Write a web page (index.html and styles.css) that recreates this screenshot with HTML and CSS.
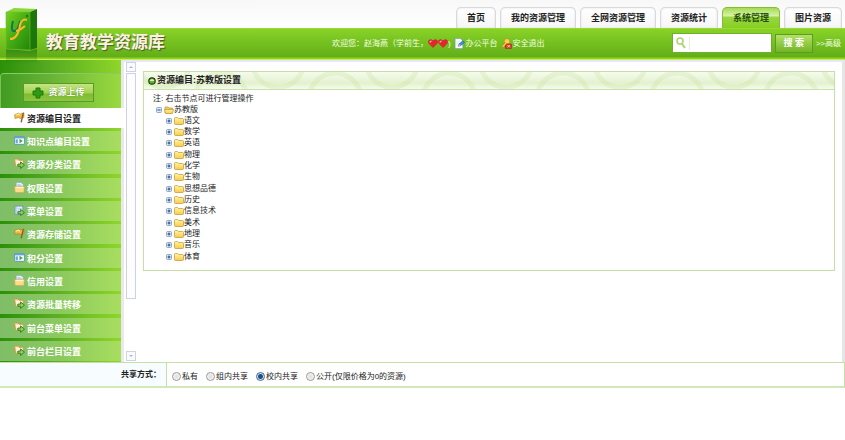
FILE: index.html
```html
<!DOCTYPE html>
<html>

<head>
    <meta charset="UTF-8">
    <meta name="viewport" content="width=device-width, initial-scale=1.0">
    <title>教育教学资源库</title>
    <link rel="stylesheet" href="styles.css">
</head>

<body>
    <svg class="sprite" xmlns="http://www.w3.org/2000/svg">
        <linearGradient id="folder-fill" x1="0" y1="0" x2="0" y2="1">
            <stop offset="0" stop-color="#fff6a8" />
            <stop offset="1" stop-color="#f8cb48" />
        </linearGradient>
        <symbol id="flag" viewBox="0 0 20 20">
            <path d="M1 5 L8 2 L11 4 L18 1 L18 10 L11 12 L8 10 L2 12 Z" fill="#f5b83d" stroke="#a8752a" />
            <path d="M3 6 L8 4 L11 6" fill="none" stroke="#fff0a0" stroke-width="2" />
            <path d="M17 2 L13 19" stroke="#8a5f2c" stroke-width="2.5" />
        </symbol>
        <symbol id="window" viewBox="0 0 20 20">
            <rect x="1" y="3" width="18" height="14" rx="1" fill="#f4fbff" stroke="#4d8fd0" stroke-width="1.5" />
            <path d="M1 5 H19" stroke="#4d8fd0" stroke-width="2" />
            <rect x="3" y="8" width="4" height="7" fill="#6aa7e0" />
            <path d="M10 7 L16 11 L10 15 Z" fill="#4da33a" />
        </symbol>
        <symbol id="move" viewBox="0 0 20 20">
            <path d="M1 2 H7 L9 4 H17 V15 H3 Z" fill="#fbe3b2" stroke="#e08f3c" stroke-width="1.5" />
            <path d="M4 7 H15 M5 10 H9" stroke="#fff" stroke-width="2" />
            <path d="M7 11 H12 V7 L19 13 L12 19 V15 H7 Z" fill="#8fd05a" stroke="#2c7a22" stroke-width="1.6" />
        </symbol>
        <symbol id="docs" viewBox="0 0 20 20">
            <path d="M4 1 H13 L17 5 V12 H4 Z" fill="#eaf5ff" stroke="#74a5d2" />
            <path d="M6 5 H12 M6 7 H15" stroke="#74a5d2" />
            <path d="M1 8 H19 L18 19 H2 Z" fill="#fbdc8b" stroke="#d9a04a" />
            <path d="M3 10 H17" stroke="#fff4c8" stroke-width="2" />
        </symbol>
        <symbol id="menu" viewBox="0 0 20 20">
            <rect x="2" y="2" width="14" height="15" fill="#edf5ff" stroke="#6c8fd0" stroke-width="1.5" />
            <path d="M5 2 V17 M7 6 H14 M7 9 H14" stroke="#7fa4dc" />
            <path d="M7 12 H12 V8 L19 14 L12 19 V16 H7 Z" fill="#8fd05a" stroke="#2c7a22" stroke-width="1.6" />
        </symbol>
        <symbol id="heart" viewBox="0 0 20 18">
            <path d="M10 17 L2 9 C-2 3 5 -2 10 4 C15 -2 22 3 18 9 Z" fill="#f02030" stroke="#b01822" />
            <path d="M4 7 Q4 4 7 4" fill="none" stroke="#ffc0c0" stroke-width="2.5" />
        </symbol>
        <symbol id="edit" viewBox="0 0 20 20">
            <path d="M2 1 H12 L16 5 V19 H2 Z" fill="#fff" stroke="#6390cc" />
            <path d="M4 7 H11 M4 10 H10 M4 13 H8" stroke="#c9def5" />
            <path d="M8 15 L9 11 L16 5 L19 8 L12 14 Z" fill="#3f93e4" stroke="#20549b" />
            <path d="M8 15 L9 11 L12 14 Z" fill="#f1c174" />
        </symbol>
        <symbol id="exit" viewBox="0 0 20 20">
            <circle cx="11" cy="6" r="5" fill="#ffd34d" stroke="#b57c18" />
            <path d="M8 8 L1 16 L4 17 L10 11" fill="#ffd34d" stroke="#b57c18" />
            <path d="M10 11 H19 V19 H8 V14 Z" fill="#e73a26" stroke="#a51f14" />
            <path d="M12 13 L16 17 M16 13 L12 17" stroke="#fff" stroke-width="1.5" />
        </symbol>
        <symbol id="folder" viewBox="0 0 20 16">
            <path d="M1 3 Q1 1 3 1 H7 L9 3 H17 Q19 3 19 5 V13 Q19 15 17 15 H3 Q1 15 1 13 Z" fill="url(#folder-fill)" stroke="#c29a35" stroke-width="1.5" />
        </symbol>
        <symbol id="folder-open" viewBox="0 0 20 16">
            <path d="M2 14 V2 H8 L10 4 H17 V7" fill="#f4cd62" stroke="#c29a35" stroke-width="1.5" />
            <path d="M1 7 H19 L17 15 H3 Z" fill="url(#folder-fill)" stroke="#c29a35" stroke-width="1.5" />
        </symbol>
        <symbol id="plus" viewBox="0 0 12 12">
            <rect x="1" y="1" width="10" height="10" rx="2" fill="#dcebfa" stroke="#6f91bd" stroke-width="1.5" />
            <path d="M3 6 H9 M6 3 V9" stroke="#1d3768" stroke-width="1.8" />
        </symbol>
        <symbol id="minus" viewBox="0 0 12 12">
            <rect x="1" y="1" width="10" height="10" rx="2" fill="#dcebfa" stroke="#6f91bd" stroke-width="1.5" />
            <path d="M3 6 H9" stroke="#1d3768" stroke-width="1.8" />
        </symbol>
    </svg>

    <header>
        <svg class="logo" viewBox="0 0 40 60" xmlns="http://www.w3.org/2000/svg">
            <defs>
                <linearGradient id="box-front" x1="0" y1="0" x2="1" y2="1">
                    <stop offset="0" stop-color="#7ad022" />
                    <stop offset="0.5" stop-color="#43ab12" />
                    <stop offset="1" stop-color="#23860a" />
                </linearGradient>
                <linearGradient id="box-reflection" x1="0" y1="0" x2="0" y2="1">
                    <stop offset="0" stop-color="#14690a" stop-opacity="0.6" />
                    <stop offset="1" stop-color="#14690a" stop-opacity="0" />
                </linearGradient>
            </defs>
            <path d="M6 41 L30 43 L37 41 V56 H6 Z" fill="url(#box-reflection)" />
            <path d="M6 4 L14 0 L37 1 L30 4 Z" fill="#8ad835" />
            <path d="M30 4 L37 1 V40 L30 42 Z" fill="#1c760b" />
            <path d="M6 4 L30 4 V42 L6 41 Z" fill="url(#box-front)" stroke="#6cc52b" stroke-width="0.6" />
            <path d="M13 13 Q10 24 15 23 Q19 21 20 13" fill="none" stroke="#0d7a50" stroke-width="2" />
            <path d="M27 12 Q22 10 20 17 Q18 31 10 31 M16 23 Q21 22 25 18" fill="none" stroke="#ffb52c" stroke-width="2" />
            <circle cx="27" cy="8" r="1" fill="#17690a" />
        </svg>
        <nav class="tabs">
            <a href="#">首页</a>
            <a href="#">我的资源管理</a>
            <a href="#">全网资源管理</a>
            <a href="#">资源统计</a>
            <a href="#" class="active">系统管理</a>
            <a href="#">图片资源</a>
        </nav>
        <div class="bar">
            <h1>教育教学资源库</h1>
            <div class="user">
                <span>欢迎您：赵海燕（学前生，</span>
                <svg class="heart"><use href="#heart" /></svg>
                <svg class="heart"><use href="#heart" /></svg>
                <span>)</span>
                <a href="#"><svg class="icon"><use href="#edit" /></svg>办公平台</a>
                <a href="#"><svg class="icon"><use href="#exit" /></svg>安全退出</a>
            </div>
            <form class="search">
                <div class="search-box">
                    <svg class="lens" viewBox="0 0 10 12">
                        <circle cx="4" cy="4" r="3" fill="none" stroke="#a9d56e" stroke-width="1.5" />
                        <path d="M6 7 L9 11" stroke="#a9d56e" stroke-width="2" />
                    </svg>
                    <input type="text" aria-label="搜索">
                </div>
                <button type="button">搜 索</button>
                <a href="#">&gt;&gt;高级</a>
            </form>
        </div>
    </header>

    <main>
        <aside>
            <div class="upload">
                <button type="button">
                    <svg viewBox="0 0 12 12"><path d="M4 1 H8 V4 H11 V8 H8 V11 H4 V8 H1 V4 H4 Z" fill="#2f9a16" stroke="#1f7a0c" /></svg>
                    资源上传
                </button>
            </div>
            <ul class="menu">
                <li class="active"><a href="#"><svg class="icon"><use href="#flag" /></svg>资源编目设置</a></li>
                <li><a href="#"><svg class="icon"><use href="#window" /></svg>知识点编目设置</a></li>
                <li><a href="#"><svg class="icon"><use href="#move" /></svg>资源分类设置</a></li>
                <li><a href="#"><svg class="icon"><use href="#docs" /></svg>权限设置</a></li>
                <li><a href="#"><svg class="icon"><use href="#menu" /></svg>菜单设置</a></li>
                <li><a href="#"><svg class="icon"><use href="#flag" /></svg>资源存储设置</a></li>
                <li><a href="#"><svg class="icon"><use href="#window" /></svg>积分设置</a></li>
                <li><a href="#"><svg class="icon"><use href="#docs" /></svg>信用设置</a></li>
                <li><a href="#"><svg class="icon"><use href="#move" /></svg>资源批量转移</a></li>
                <li><a href="#"><svg class="icon"><use href="#move" /></svg>前台菜单设置</a></li>
                <li><a href="#"><svg class="icon"><use href="#move" /></svg>前台栏目设置</a></li>
            </ul>
        </aside>
        <div class="scrollbar">
            <button type="button" aria-label="向上"><svg viewBox="0 0 8 8"><path d="M2 5 L4 3 L6 5 Z" fill="#b0b6c6" /></svg></button>
            <div class="thumb"></div>
            <div class="track"></div>
            <button type="button" aria-label="向下"><svg viewBox="0 0 8 8"><path d="M2 3 L4 5 L6 3 Z" fill="#b0b6c6" /></svg></button>
        </div>
        <section class="content">
            <div class="panel">
                <h2>
                    <svg viewBox="0 0 10 10">
                        <circle cx="5" cy="5" r="4" fill="#63b52c" stroke="#24401c" stroke-width="1.5" />
                        <path d="M2 5 Q5 0 8 5 Z" fill="#d9f5b8" />
                    </svg>
                    资源编目:苏教版设置
                </h2>
                <div class="panel-body">
                    <p>注: 右击节点可进行管理操作</p>
                    <ul class="tree">
                        <li>
                            <div class="node"><svg class="toggle"><use href="#minus" /></svg><svg class="folder"><use href="#folder-open" /></svg>苏教版</div>
                            <ul>
                                <li class="node"><svg class="toggle"><use href="#plus" /></svg><svg class="folder"><use href="#folder" /></svg>语文</li>
                                <li class="node"><svg class="toggle"><use href="#plus" /></svg><svg class="folder"><use href="#folder" /></svg>数学</li>
                                <li class="node"><svg class="toggle"><use href="#plus" /></svg><svg class="folder"><use href="#folder" /></svg>英语</li>
                                <li class="node"><svg class="toggle"><use href="#plus" /></svg><svg class="folder"><use href="#folder" /></svg>物理</li>
                                <li class="node"><svg class="toggle"><use href="#plus" /></svg><svg class="folder"><use href="#folder" /></svg>化学</li>
                                <li class="node"><svg class="toggle"><use href="#plus" /></svg><svg class="folder"><use href="#folder" /></svg>生物</li>
                                <li class="node"><svg class="toggle"><use href="#plus" /></svg><svg class="folder"><use href="#folder" /></svg>思想品德</li>
                                <li class="node"><svg class="toggle"><use href="#plus" /></svg><svg class="folder"><use href="#folder" /></svg>历史</li>
                                <li class="node"><svg class="toggle"><use href="#plus" /></svg><svg class="folder"><use href="#folder" /></svg>信息技术</li>
                                <li class="node"><svg class="toggle"><use href="#plus" /></svg><svg class="folder"><use href="#folder" /></svg>美术</li>
                                <li class="node"><svg class="toggle"><use href="#plus" /></svg><svg class="folder"><use href="#folder" /></svg>地理</li>
                                <li class="node"><svg class="toggle"><use href="#plus" /></svg><svg class="folder"><use href="#folder" /></svg>音乐</li>
                                <li class="node"><svg class="toggle"><use href="#plus" /></svg><svg class="folder"><use href="#folder" /></svg>体育</li>
                            </ul>
                        </li>
                    </ul>
                </div>
            </div>
        </section>
    </main>

    <form class="share" role="radiogroup" aria-labelledby="share-title">
        <div class="share-title" id="share-title">共享方式：</div>
        <div class="share-options">
            <label><input type="radio" name="share">私有</label>
            <label><input type="radio" name="share">组内共享</label>
            <label><input type="radio" name="share" checked>校内共享</label>
            <label><input type="radio" name="share">公开(仅限价格为0的资源)</label>
        </div>
    </form>
</body>

</html>
```

FILE: styles.css
```css
* {
    box-sizing: border-box;
}

body {
    margin: 0;
    font-family: "Liberation Sans", "Noto Sans CJK SC", sans-serif;
    font-size: 8px;
    line-height: 11px;
    color: #222;
    background-color: #fff;
}

h1,
h2,
p,
ul {
    margin: 0;
    padding: 0;
}

ul {
    list-style: none;
}

a {
    color: inherit;
    text-decoration: none;
}

button,
input {
    font: inherit;
    margin: 0;
    padding: 0;
}

svg {
    flex: none;
}

.sprite {
    position: absolute;
    width: 0;
    height: 0;
}

/* the symbols scale to the size of the svg that uses them */
.icon {
    width: 11px;
    height: 11px;
}

/* header */

header {
    position: relative;
    background: linear-gradient(#f8f8f8, #fff 28px);
}

.logo {
    position: absolute;
    left: 0;
    top: 8px;
    width: 40px;
    height: 60px;
    z-index: 1;
}

.tabs {
    display: flex;
    justify-content: flex-end;
    gap: 4px;
    padding: 7px 3px 0 0;
}

.tabs a {
    padding: 0 10px;
    border: 1px solid #d9d9d9;
    border-bottom: 0;
    border-radius: 5px 5px 0 0;
    box-shadow: inset 0 0 2px #ddd;
    background: linear-gradient(#fff, #f6f6f6);
    font-size: 9px;
    font-weight: bold;
    line-height: 20px;
}

.tabs .active {
    border-color: #7fbf3a;
    box-shadow: none;
    background: linear-gradient(#a5dc52, #d9f2a6 8px, #9ad546 9px, #86d01f);
    color: #24500a;
}

.bar {
    display: flex;
    align-items: center;
    height: 32px;
    padding: 0 4px 2px 46px;
    border-top: 1px solid #9bd92a;
    border-bottom: 1px solid #c5ee5a;
    background: linear-gradient(#88d228, #62ae18 28px, #8fd41f 29px);
    color: #f3ffe0;
}

h1 {
    font-size: 17px;
    line-height: 24px;
    color: #fbf2e0;
    text-shadow: 1px 1px 1px #4a5a2a;
}

.user {
    display: flex;
    align-items: center;
    margin-left: 21%;
}

.user a {
    display: flex;
    align-items: center;
    gap: 1px;
    margin-left: 3px;
}

.heart {
    width: 10px;
    height: 9px;
}

.search {
    display: flex;
    align-items: center;
    gap: 3px;
    margin-left: auto;
}

.search-box {
    display: flex;
    align-items: center;
    width: 100px;
    height: 20px;
    padding-left: 3px;
    border: 1px solid #6fae2f;
    background-color: #fff;
}

.lens {
    width: 10px;
    height: 12px;
}

.search-box input {
    flex: 1;
    min-width: 0;
    height: 13px;
    margin-left: 3px;
    border: 0;
    border-left: 1px solid #e4f2cf;
    outline: 0;
}

.search button {
    width: 38px;
    height: 19px;
    border: 1px solid #5d9c22;
    background: linear-gradient(#b4e06c, #94cd45 8px, #74b427);
    color: #fff;
    font-size: 9px;
    font-weight: bold;
}

/* main area */

main {
    display: flex;
    border-right: 3px solid #e6e6e6;
}

aside {
    width: 124px;
    padding: 13px 0 1px;
    border-right: 3px solid #e8e8ee;
    background: linear-gradient(90deg, #2b9008, #55aa20 40%, #8fd62a);
}

.upload {
    display: flex;
    justify-content: center;
    height: 35px;
    padding: 9px 5px 0 0;
    border-top: 1px solid #8bc968;
    border-left: 1px solid #7cc05a;
    border-radius: 4px 0 0;
    background-color: rgba(255, 255, 255, .1);
}

.upload button {
    display: flex;
    align-items: center;
    justify-content: center;
    gap: 4px;
    width: 71px;
    height: 19px;
    border: 1px solid #5d9a24;
    background: linear-gradient(#c4e483, #a3d350 9px, #7fba33 10px, #8cc642);
    color: #fff;
    font-size: 9px;
    font-weight: bold;
    text-shadow: 0 0 1px #4c7c1c;
}

.upload svg {
    width: 12px;
    height: 12px;
}

.menu li {
    margin-bottom: 3px;
    background: linear-gradient(90deg, #7fbd68, #8bc95f 50%, #a8de5f);
}

.menu li:nth-child(3n) {
    margin-bottom: 4px;
}

.menu li:last-child {
    margin-bottom: 0;
}

.menu a {
    display: flex;
    align-items: center;
    gap: 2px;
    padding: 2px 0 0 14px;
    color: #fff;
    font-size: 9px;
    font-weight: bold;
    line-height: 18px;
}

.menu .icon {
    margin-bottom: 4px;
}

.menu .active {
    margin-right: -3px;
    background: #fff;
}

.menu .active a {
    color: #222;
}

.scrollbar {
    display: flex;
    flex-direction: column;
    gap: 1px;
    width: 14px;
    padding: 0 2px 1px;
    border-top: 2px solid #e8e8f4;
}

.scrollbar button {
    display: flex;
    height: 10px;
    border: 1px solid #ccd3e4;
    background-color: #fafbff;
}

.thumb {
    flex: 9;
    border: 1px solid #ccd3e4;
    background-color: #fdfdff;
}

.track {
    flex: 2;
}

.content {
    flex: 1;
    padding: 9px 7px 0 5px;
    border-top: 2px solid #e8e8f4;
}

.panel {
    border: 1px solid #c5dfa4;
}

h2 {
    display: flex;
    align-items: center;
    gap: 1px;
    padding-left: 4px;
    border-bottom: 1px solid #c9e2a9;
    background:
        radial-gradient(circle at 50% 150%, transparent 23px, rgba(190, 222, 145, .25) 24px, rgba(190, 222, 145, .25) 28px, transparent 29px) 20px 0 / 114px 18px,
        radial-gradient(circle at 50% -60%, transparent 23px, rgba(190, 222, 145, .25) 24px, rgba(190, 222, 145, .25) 28px, transparent 29px) 77px 0 / 114px 18px,
        linear-gradient(#f6fbee, #e4f1cf 11px, #f5faec);
    font-size: 9px;
    line-height: 17px;
}

h2 svg {
    width: 8px;
    height: 8px;
}

.panel-body {
    padding: 3px 9px 8px;
}

.tree {
    padding-left: 3px;
}

.tree ul {
    padding-left: 10px;
}

.node {
    display: flex;
    align-items: center;
}

.tree ul .node:nth-child(3n) {
    margin-bottom: 1px;
}

.toggle {
    width: 6px;
    height: 6px;
    margin-right: 2px;
}

.folder {
    width: 10px;
    height: 8px;
}

/* share row */

.share {
    display: flex;
    border: 1px solid #c5dfa4;
    border-left: 0;
    border-bottom: 2px solid #d3e8b8;
}

.share-title {
    width: 167px;
    padding-right: 5px;
    border-right: 1px solid #c5dfa4;
    background-color: #f6fcff;
    font-weight: bold;
    line-height: 23px;
    text-align: right;
}

.share-options {
    display: flex;
    align-items: center;
    gap: 8px;
    padding: 3px 5px 0;
}

.share-options label {
    display: flex;
    align-items: center;
    gap: 1px;
}

.share-options input {
    appearance: none;
    width: 9px;
    height: 9px;
    border: 1px solid #999;
    border-radius: 50%;
    background: radial-gradient(#ddd, #fff);
}

.share-options input:checked {
    border-color: #46688c;
    background: radial-gradient(#1c4f86 2px, #c9e4f5 3px);
}
```
